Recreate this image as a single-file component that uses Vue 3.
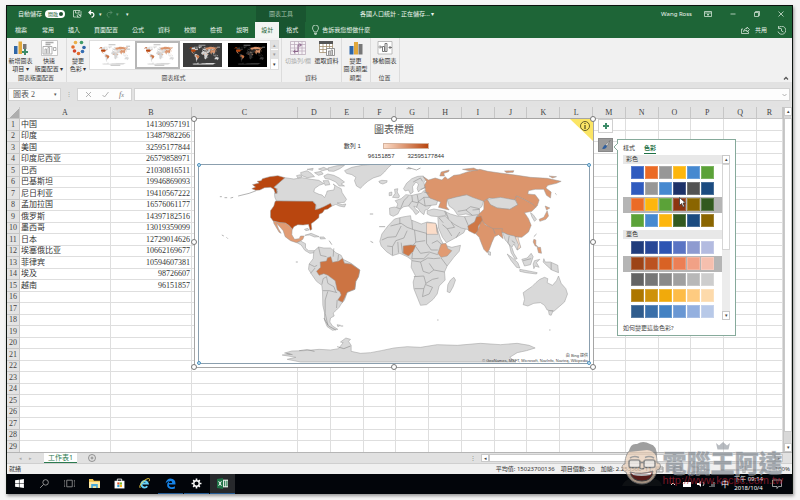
<script setup>
import { ref } from 'vue'

const tabs = ['檔案', '常用', '插入', '頁面配置', '公式', '資料', '校閱', '檢視', '說明']
const letters = 'ABCDEFGHIJKLMNOPQR'.split('')
const data = [
  ['中国', '14130957191'], ['印度', '13487982266'], ['美国', '32595177844'],
  ['印度尼西亚', '26579858971'], ['巴西', '21030816511'], ['巴基斯坦', '19946869093'],
  ['尼日利亚', '19410567222'], ['孟加拉国', '16576061177'], ['俄罗斯', '14397182516'],
  ['墨西哥', '13019359099'], ['日本', '12729014626'], ['埃塞俄比亚', '10662169677'],
  ['菲律宾', '10594607381'], ['埃及', '98726607'], ['越南', '96151857'],
]
const rows = Array.from({ length: 29 }, (_, i) => data[i] || ['', ''])
const formula = ref('')
const nameBox = ref('圖表 2')

const colorful = [
  ['#2f5bbf', '#eb6b26', '#979797', '#fdb60d', '#4689d0', '#5ba238'],
  ['#2f5bbf', '#979797', '#4689d0', '#1d3168', '#535353', '#1b4b80'],
  ['#eb6b26', '#fdb60d', '#5ba238', '#8c3510', '#8a6500', '#32591f'],
  ['#5ba238', '#4689d0', '#fdb60d', '#32591f', '#1b4b80', '#8a6500'],
]
const mono = [
  ['#203c7c', '#274797', '#2d55b3', '#5a74c4', '#8e9bd0', '#b3bbe0'],
  ['#9c4316', '#bb5220', '#d96224', '#ec7f55', '#f1a186', '#f5bfae'],
  ['#646464', '#777777', '#898989', '#a0a0a0', '#b8b8b8', '#cdcdcd'],
  ['#ad7700', '#ce920a', '#f1aa0b', '#fdbc48', '#fecb80', '#fddaab'],
  ['#2f5c8d', '#396fa9', '#4382c3', '#6997d3', '#94b0df', '#b8c9e8'],
]

/* Land areas of the map chart; tone selects the value colour */
const land = [
  // North America
  ['n', 'M283 203 310 207 335 203 362 208 385 211 400 221 386 226 372 236 370 246 386 253 395 255 402 263 408 250 410 243 430 240 433 228 428 222 440 230 452 236 455 248 468 268 462 277 440 279 455 284 466 282 462 291 446 288 436 283 420 290 402 291 385 297 374 298 377 288 370 275 258 273 253 262 252 250 262 246 250 232Z'],
  ['n', 'M330 188 350 182 362 190 372 200 350 203 334 197ZM318 197 330 194 334 201 322 204ZM372 188 392 184 398 192 384 196ZM350 178 368 175 366 181ZM384 177 400 172 412 178 396 182ZM412 174 440 167 462 166 448 176 430 184 414 183ZM400 198 412 192 430 196 446 204 462 216 452 222 462 228 446 228 436 216 418 208 404 206ZM398 212 414 212 418 224 404 226Z'],
  ['n', 'M462 182 484 172 520 165 560 162 603 164 592 174 582 186 570 197 548 204 532 214 518 226 510 235 498 228 492 212 496 202 484 194 468 190Z'],
  ['n', 'M565 214 574 211 590 212 589 217 577 222 568 219Z'],
  ['h', 'M283 203 262 197 238 200 216 206 212 212 200 214 206 219 186 224 195 231 184 236 196 241 208 240 222 233 240 232 250 238 254 250 260 250 258 236 250 232Z'],
  ['h', 'M258 273 366 274 376 284 374 299 384 297 400 290 420 280 424 288 412 297 402 299 396 308 386 313 385 323 372 334 362 341 364 358 359 361 354 343 338 345 322 344 310 350 306 358 294 345 284 339 268 338 248 333 240 322 240 302 250 288 254 274Z'],
  ['m', 'M249 333 268 338 284 339 296 347 305 358 304 374 312 388 326 386 330 378 341 378 337 388 327 395 318 398 300 392 284 380 278 362 266 348 258 340 264 356 272 370 266 367 256 350 250 340Z'],
  ['n', 'M319 398 330 393 345 401 345 414 354 422 372 422 374 428 358 430 343 421 332 405ZM343 376 362 370 386 380 372 381 358 375ZM388 381 400 381 405 386 390 387ZM342 358 352 355 356 360 346 362Z'],
  // South America
  ['n', 'M370 424 384 411 400 414 420 414 436 428 452 436 458 448 482 460 508 480 504 500 496 514 493 538 470 547 462 570 452 582 446 592 438 600 428 609 431 618 420 624 418 636 426 648 442 658 426 661 410 650 402 630 402 608 397 586 396 544 394 526 378 514 364 494 354 478 356 462 368 446Z'],
  ['b', 'M378 484 390 472 389 456 408 453 411 443 421 440 426 457 445 453 456 445 462 460 482 462 508 480 504 500 496 514 493 538 470 547 462 565 456 577 442 570 452 555 448 545 440 540 434 512 412 496 400 491 386 496Z'],
  // Europe
  ['n', 'M597 294 612 291 630 296 622 312 608 319 598 314ZM606 262 614 250 612 238 622 236 620 246 627 258 624 264ZM596 248 604 246 604 256 596 257Z'],
  ['n', 'M639 236 648 220 664 206 682 199 698 198 708 208 700 216 704 234 690 238 684 246 680 236 684 222 676 216 666 230 668 246 660 252 654 240 644 243Z'],
  ['n', 'M614 272 632 266 646 254 664 256 692 250 702 240 712 246 716 262 742 270 738 284 722 286 712 298 704 300 700 314 690 306 682 294 670 288 674 296 686 306 676 314 668 302 654 288 640 290 630 297 618 292 622 282Z'],
  ['n', 'M710 302 730 297 748 300 766 304 766 316 744 320 722 318 710 312Z'],
  // Africa
  ['n', 'M612 327 636 321 660 317 662 330 678 336 692 342 710 336 735 340 742 360 750 386 760 405 784 412 810 406 806 424 790 442 770 468 762 486 764 510 746 528 740 552 728 568 708 584 690 586 682 566 670 536 668 516 674 496 662 472 664 450 650 440 628 430 606 437 588 425 572 408 568 394 574 372 592 348Z'],
  ['n', 'M780 510 790 502 795 510 788 530 778 548 770 545 772 524Z'],
  ['e', 'M708 338 736 340 742 373 708 373Z'],
  ['k', 'M638 408 660 405 676 406 668 424 654 438 638 430Z'],
  ['m', 'M742 430 752 402 766 400 772 416 784 422 770 438 752 442Z'],
  // Asia
  ['n', 'M742 322 764 318 782 336 802 348 826 354 820 368 794 384 768 398 756 382 744 354Z'],
  ['n', 'M762 304 780 312 800 318 822 320 862 314 858 332 834 348 838 360 812 354 790 342 772 326Z'],
  ['n', 'M770 268 794 260 842 252 880 270 874 290 866 296 868 312 846 316 826 312 802 316 790 298 776 288Z'],
  ['r', 'M698 200 714 210 734 204 754 210 764 200 772 208 790 196 806 194 830 186 868 178 892 184 928 189 980 196 1020 202 1070 205 1112 214 1098 220 1072 226 1066 234 1082 246 1080 264 1068 256 1060 238 1034 238 1014 242 1012 252 1034 254 1046 270 1040 288 1028 296 1026 282 1000 268 978 258 974 270 940 268 896 264 880 274 846 262 828 254 794 262 770 268 768 290 776 300 744 292 750 276 718 264 706 246 702 226 708 214Z'],
  ['r', 'M748 198 752 186 776 180 774 185 760 190 762 198ZM816 178 850 174 862 180 836 182ZM942 183 970 182 968 187 948 188ZM1076 198 1098 200 1086 204Z'],
  ['n', 'M888 268 930 262 974 270 982 284 958 298 920 294 898 284Z'],
  ['r', 'M880 274 890 268 900 284 920 294 958 298 982 284 974 268 978 258 1000 268 1026 282 1036 292 1024 304 1002 308 1014 326 1022 346 1014 366 994 382 974 381 956 376 938 368 920 366 896 352 872 332 862 316 880 298Z'],
  ['r', 'M872 326 884 344 908 356 936 356 934 366 938 386 924 374 912 380 904 398 896 420 890 428 880 418 872 398 866 382 856 372 866 350Z'],
  ['k', 'M832 348 852 336 858 320 872 318 876 330 864 348 862 362 854 372 834 362Z'],
  ['n', 'M936 366 952 374 972 378 982 392 990 412 980 420 970 402 964 412 970 430 980 446 974 448 962 428 956 402 944 390Z'],
  ['e', 'M974 382 982 380 986 396 991 412 980 420 984 404Z'],
  ['n', 'M1020 308 1028 314 1038 328 1032 334 1024 320ZM892 424 900 426 900 436 894 434Z'],
  ['m', 'M1064 288 1078 294 1068 300ZM1070 302 1074 318 1066 328 1048 334 1046 328 1060 322Z'],
  ['m', 'M1030 388 1036 390 1036 404 1042 410 1034 408 1028 396ZM1040 412 1050 412 1053 430 1044 428Z'],
  ['n', 'M950 432 966 444 982 458 988 474 978 472 962 452ZM988 478 1010 482 1040 488 1038 492 1006 488 988 484ZM994 448 1010 444 1022 430 1028 440 1020 464 1002 468ZM1032 452 1048 448 1038 458 1046 472 1034 468 1030 476 1028 462ZM1060 446 1064 456 1080 456 1102 466 1104 488 1084 480 1070 468 1058 456Z'],
  ['n', 'M998 548 1012 538 1024 530 1036 518 1048 508 1062 502 1072 506 1070 518 1086 526 1098 512 1104 498 1112 520 1126 536 1131 552 1122 576 1106 590 1090 604 1070 600 1062 586 1050 578 1030 580 1012 588 998 584 1002 568ZM1074 602 1088 602 1082 616 1076 614Z'],
  // Antarctica
  ['n', 'M275 735 300 733 282 729 304 723 340 722 386 718 420 720 444 716 458 698 450 696 466 684 480 688 474 694 482 706 482 724 510 730 540 728 572 722 610 714 650 710 690 712 740 704 800 706 870 700 930 704 980 700 1016 706 1034 714 1008 722 980 728 958 742 976 756 330 756 290 748 316 742Z'],
  ['n', 'M440 644 450 646 442 650ZM88 618Z'],
]
const borders = 'M384 411 390 436 408 440M356 462 372 470 380 466M360 490 374 474M394 524 398 506 408 500M408 500 412 520 430 530 436 546M397 542 416 542 440 548M412 544 404 570 404 610 412 645M430 415 428 440M444 434 442 452M440 570 438 594' +
  'M600 348 632 340 650 352 672 360 708 370M628 324 628 342M664 330 666 358M632 348 616 380 592 382 574 390M650 362 640 384 616 392 606 410 590 408M672 360 676 396 666 408M708 370 708 400 722 420 742 420M676 396 704 392M676 410 690 430 716 426 742 434M666 428 664 446 700 446 716 430M664 452 690 456 712 444 730 446 750 444M690 456 698 484 716 490 730 480 716 460M670 500 700 498 706 520 726 508 744 504M672 536 700 536 706 520M700 536 696 560 716 552 726 532 706 524M730 480 762 486M752 444 770 468M724 400 740 392 752 402M606 410 606 436M622 396 624 428M632 398 636 430' +
  'M630 296 640 272 654 258M654 288 664 274 680 278 700 262 716 262M664 256 666 274M680 254 684 276 704 288 722 286M684 276 678 292M700 262 704 288M668 216 690 204 696 214M690 240 706 230M716 250 700 246' +
  'M782 336 792 352 770 356 756 344M770 356 784 378M796 384 808 366M766 306 774 326M822 320 834 348M802 304 826 300 846 316M846 300 868 298M826 300 840 290 866 296M746 324 758 338M908 356 914 372M956 378 952 400 962 410M964 392 974 400M1082 458 1082 480M998 452 1022 446M740 368 738 344'
const islands = 'M197 242 176 250 143 258M88 260H94M102 263H110M120 264 128 262M94 375 100 378M108 382 112 386M316 456H322M538 312H548M540 394 548 398M566 350H584M652 172 678 180 690 174M648 176 662 176M416 392 424 404M744 630H740M1076 660H1080M1094 250 1098 254M400 624 414 648 436 660M450 648H458M260 236 256 250M1038 372 1030 380M288 730 306 734M326 722 350 719 372 724M440 710 460 716 480 708'
</script>

<template>
  <div class="desktop">
    <svg class="defs" aria-hidden="true">
      <symbol id="world" viewBox="27 165 1167 594">
        <path v-for="(a, i) in land" :key="i" :d="a[1]" class="land" :class="a[0]" />
        <path :d="borders" class="lines" />
        <path :d="islands" class="isles" />
      </symbol>
    </svg>

    <main class="window">
      <header class="green">
        <div class="titlebar">
          <div class="quick">
            <span>自動儲存</span>
            <button class="switch" role="switch" aria-checked="true"><span>開啟</span><i></i></button>
            <svg class="save" width="9" height="8" viewBox="0 0 18 16"><path d="M1 1h13l2 2v4M1 1v13h5M5 1v5h7V1M8 12a4 4 0 0 1 7-2M16 7v4h-4M16 12a4 4 0 0 1-7 2M8 16v-3h3" /></svg>
            <svg width="8" height="8" viewBox="0 0 16 16"><path class="thick" d="M6 1 2 5l4 4M2 5h7a5 5 0 0 1 0 9H7" /></svg>
            <span class="tiny">▾</span>
            <svg class="faint" width="8" height="8" viewBox="0 0 16 16"><path d="m10 1 4 4-4 4M14 5H7a5 5 0 0 0 0 9h2" /></svg>
            <span class="tiny faint">▾</span>
            <span class="tiny last">▾</span>
          </div>
          <div class="context">圖表工具</div>
          <div class="doc">各國人口統計 - 正在儲存... ▾</div>
          <div class="system">
            <span class="user">Wang Ross</span>
            <svg width="8" height="8" viewBox="0 0 16 16"><path d="M1 3h14v10H1zM1 6h14M8 12V8M6 10l2-2 2 2" /></svg>
            <svg width="6" height="8" viewBox="0 0 12 16"><path d="M1 8h10" /></svg>
            <svg width="6" height="8" viewBox="0 0 12 16"><path d="M1 5h8v8H1zM3 5V3h8v8H9" /></svg>
            <svg width="6" height="8" viewBox="0 0 12 16"><path d="m1 3 10 10M11 3 1 13" /></svg>
          </div>
        </div>
        <nav class="tabs">
          <button v-for="t in tabs" :key="t">{{ t }}</button>
          <button class="active">設計</button>
          <button class="format">格式</button>
          <button class="tell">
            <svg width="7" height="10" viewBox="0 0 14 20"><path d="M4 14c0-3-3-4-3-8a6 6 0 0 1 12 0c0 4-3 5-3 8zM4 17h6M5 19h4" /></svg>告訴我您想做什麼</button>
          <span class="share">
            <svg width="9" height="8" viewBox="0 0 18 16"><path d="M4 6H1v9h14v-4M5 11c1-5 4-6 7-6V2l5 5-5 5V9c-3 0-5 0-7 2z" /></svg>
            <button>共用</button>
            <svg width="9" height="9" viewBox="0 0 18 18"><path d="M3 4a8 8 0 1 1-1 7M3 0v5h5M9 5v5l4 2" /></svg>
          </span>
        </nav>
      </header>

      <section class="ribbon">
        <div class="group">
          <div class="tools">
            <button class="tool">
              <svg width="16" height="16" viewBox="0 0 32 32"><path fill="#2f66a8" d="M2 12h7v16H2z" /><path fill="#e2a83c" d="M11 3h7v25h-7z" /><path fill="#777" d="M20 8h7v20h-7z" /><path stroke="#f1f1f1" stroke-width="8" d="M18 24h13M24 18v13" /><path stroke="#3c8b68" stroke-width="4" d="M18 24h12M24 18v12" /></svg>
              新增圖表<br>項目 ▾</button>
            <button class="tool wide">
              <svg width="17" height="16" viewBox="0 0 34 32"><path fill="#fff" stroke="#b5b5b5" stroke-width="1.5" d="M1 1h32v30H1z" /><path stroke="#aaa" stroke-width="3" d="M9 5h16M9 9h10" /><path fill="none" stroke="#999" stroke-width="1.5" d="M4 13h18v15H4zM8 27V18h3v9M14 27V15h3v12M25 15h5v6h-5z" /></svg>
              快速<br>版面配置 ▾</button>
          </div>
          <h2>圖表版面配置</h2>
        </div>
        <div class="group styles">
          <div class="tools">
            <button class="tool colors">
              <svg width="15" height="16" viewBox="0 0 30 32"><g><circle cx="9" cy="5" r="3.6" fill="#eab04b" /><circle cx="21" cy="5" r="3.6" fill="#3f9b69" /><circle cx="4" cy="14" r="3.6" fill="#e36b2b" /><circle cx="26" cy="15" r="3.6" fill="#2f66a8" /><circle cx="7" cy="22" r="3.6" fill="#d5442a" /><circle cx="23" cy="23" r="3.6" fill="#356eb3" /><circle cx="15" cy="27" r="3.6" fill="#e36b2b" /></g></svg>
              變更<br>色彩 ▾</button>
            <div class="gallery">
              <button class="thumb" aria-label="樣式 1"><svg viewBox="0 0 40 24"><use href="#world" x="1" y="3" width="38" height="19" /><path stroke="#b9b9b9" d="M16 1.5h7M34 3h4M34 6h4M18 22.5h10" /></svg></button>
              <button class="thumb picked" aria-label="樣式 2"><svg viewBox="0 0 40 24"><use href="#world" x="1" y="3" width="38" height="19" /><path stroke="#b9b9b9" d="M16 1.5h7M17 22.5h10" /></svg></button>
              <button class="thumb dark" aria-label="樣式 3"><svg viewBox="0 0 40 24"><use href="#world" x="1" y="3" width="38" height="19" /><path stroke="#aaa" d="M16 2h7M35 4h3" /></svg></button>
              <button class="thumb black" aria-label="樣式 4"><svg viewBox="0 0 40 24"><use href="#world" x="1" y="3" width="38" height="19" /><path stroke="#777" d="M16 2h7M35 4h3" /></svg></button>
              <div class="spin"><button>▴</button><button>▾</button><button class="more">▾</button></div>
            </div>
          </div>
          <h2>圖表樣式</h2>
        </div>
        <div class="group">
          <div class="tools">
            <button class="tool wide off">
              <svg width="16" height="16" viewBox="0 0 32 32"><path fill="#f6f2f6" stroke="#b9aab9" stroke-width="1.5" d="M1 3h30v26H1zM1 9h30M1 16h30M1 22h30M9 3v26M17 3v26M24 3v26" /><path fill="none" stroke="#8c668c" stroke-width="2" d="M8 23h8V10h6M19 7l4 3-4 3M11 20l-4 3 4 3" /></svg>
              切換列/欄</button>
            <button class="tool">
              <svg width="16" height="16" viewBox="0 0 32 32"><path fill="#fff" stroke="#a08b6a" stroke-width="1.5" d="M1 3h26v22H1zM1 13h26M1 19h26M8 3v22M15 3v22M21 3v22" /><path fill="#555" d="M0 2h28v6H0z" /><path fill="#fff" stroke="#777" stroke-width="1.5" d="M15 17h16v14H15zM19 30v-8h3v8M24 30V20h3v10" /></svg>
              選取資料</button>
          </div>
          <h2>資料</h2>
        </div>
        <div class="group">
          <div class="tools">
            <button class="tool">
              <svg width="16" height="16" viewBox="0 0 32 32"><path fill="#2f66a8" d="M3 12h8v17H3z" /><path fill="#e2a83c" d="M12 4h8v25h-8z" /><path fill="#777" d="M21 8h8v21h-8z" /></svg>
              變更<br>圖表類型</button>
          </div>
          <h2>類型</h2>
        </div>
        <div class="group">
          <div class="tools">
            <button class="tool">
              <svg width="16" height="16" viewBox="0 0 32 32"><path fill="#fff" stroke="#aaa" stroke-width="1.5" d="M2 3h28v25H2z" /><path fill="none" stroke="#777" stroke-width="2" d="M11 23V13h4v10zM16 23V7h4v16zM3 14h6M6 11l3 3-3 3M30 15h-6M27 12l-3 3 3 3" /></svg>
              移動圖表</button>
          </div>
          <h2>位置</h2>
        </div>
        <button class="collapse" aria-label="摺疊功能區"><svg width="6" height="4" viewBox="0 0 12 8"><path d="m2 7 4-4 4 4" fill="none" stroke="#555" stroke-width="2.5" /></svg></button>
      </section>

      <section class="formula">
        <label class="name"><input v-model="nameBox" aria-label="名稱方塊"><span>▾</span></label>
        <span class="dots">⋮</span>
        <div class="fx">
          <svg width="7" height="7" viewBox="0 0 14 14"><path d="m2 2 10 10M12 2 2 12" /></svg>
          <svg width="7" height="7" viewBox="0 0 14 14"><path d="m1 8 4 4 8-10" /></svg>
          <em>f<sub>x</sub></em>
        </div>
        <label class="entry"><input v-model="formula" aria-label="資料編輯列"><svg width="5" height="4" viewBox="0 0 10 8"><path d="m1 2 4 4 4-4" /></svg></label>
      </section>

      <section class="sheet">
        <div class="grid">
          <table>
            <colgroup>
              <col class="c-num"><col class="c-a"><col class="c-b"><col class="c-c">
              <col v-for="n in 14" :key="n"><col class="c-r">
            </colgroup>
            <thead>
              <tr><th class="corner"></th><th v-for="l in letters" :key="l" scope="col">{{ l }}</th></tr>
            </thead>
            <tbody>
              <tr v-for="(r, i) in rows" :key="i">
                <th scope="row">{{ i + 1 }}</th>
                <td>{{ r[0] }}</td><td class="num">{{ r[1] }}</td>
                <td v-for="n in 16" :key="n"></td>
              </tr>
            </tbody>
          </table>

          <figure class="chart">
            <figcaption>圖表標題</figcaption>
            <div class="legend">
              <span>數列 1</span>
              <div class="scale"><div class="ramp"></div><div class="ends"><span>96151857</span><span>32595177844</span></div></div>
            </div>
            <div class="plot">
              <svg class="map" viewBox="0 0 389 198" role="img" aria-label="世界地圖"><use href="#world" width="389" height="198" /></svg>
              <p>由 Bing 提供<br>© GeoNames, MSFT, Microsoft, NavInfo, Navteq, Wikipedia</p>
              <i class="dot tl"></i><i class="dot tr"></i><i class="dot bl"></i><i class="dot br"></i>
            </div>
            <svg class="info" width="24" height="22" viewBox="0 0 24 22"><path fill="#fbe565" d="M1 0h23v22z" /><circle cx="16" cy="7" r="4.5" fill="none" stroke="#66602a" /><path stroke="#4d491f" stroke-width="1.2" d="M16 6v4M16 4v1" /></svg>
            <i v-for="h in ['nw', 'n', 'ne', 'w', 'e', 'sw', 's', 'se']" :key="h" class="handle" :class="h"></i>
          </figure>

          <div class="side">
            <button aria-label="圖表項目"><svg width="8" height="8" viewBox="0 0 8 8"><path stroke="#3c8b68" stroke-width="2" d="M4 1v6M1 4h6" /></svg></button>
            <button class="on" aria-label="圖表樣式"><svg width="10" height="10" viewBox="0 0 20 20"><path d="m18 1-9 9 3 2z" fill="#fff" stroke="#555" /><path d="M9 10c-4 0-4 5-7 7 4 2 9 0 10-5z" fill="#2f5f9e" /></svg></button>
          </div>

          <aside class="palette">
            <div class="ptabs"><button>樣式</button><button class="sel">色彩</button></div>
            <div class="pbody">
              <div class="plist">
                <h3>彩色</h3>
                <button v-for="(r, i) in colorful" :key="'c' + i" class="prow" :class="{ hit: i === 2 }" :aria-label="'彩色 ' + (i + 1)"><i v-for="c in r" :key="c" :style="{ background: c }"></i></button>
                <h3 class="second">單色</h3>
                <button v-for="(r, i) in mono" :key="'m' + i" class="prow" :class="{ hit: i === 1 }" :aria-label="'單色 ' + (i + 1)"><i v-for="c in r" :key="c" :style="{ background: c }"></i></button>
              </div>
              <div class="pscroll"><button>▴</button><span></span><button>▾</button></div>
            </div>
            <a href="#colors">如何變更這些色彩?</a>
            <svg class="beak" width="5" height="8" viewBox="0 0 5 8"><path d="M5 0 1 4l4 4" fill="#fff" stroke="#86aa9b" /></svg>
            <svg class="cursor" width="7" height="11" viewBox="0 0 14 22"><path d="M1 1v16l4-4 3 7 3-1-3-7h5z" fill="#fff" stroke="#333" stroke-width="1.5" /></svg>
          </aside>
        </div>
        <div class="vscroll"><button>▴</button><span></span><button>▾</button></div>
      </section>

      <footer class="sheets">
        <span class="arrows"><button>◂</button><button>▸</button></span>
        <button class="sheet-tab">工作表1</button>
        <button class="add" aria-label="新增工作表"><svg width="8" height="8" viewBox="0 0 16 16"><circle cx="8" cy="8" r="7" /><path d="M8 5v6M5 8h6" /></svg></button>
        <div class="hscroll"><span>⋮</span><button>◂</button><i></i><button>▸</button></div>
      </footer>

      <footer class="status">
        <span>就緒</span>
        <div class="stats"><span>平均值: 15023700136</span><span>項目個數: 30</span><span>加總: 2.25356E+11</span></div>
        <div class="views">
          <svg width="64" height="7" viewBox="0 0 64 7"><path d="M1 1h7v5H1zM1 3h7M4 1v5M19 1h7v5h-7zM37 1h6v5h-6zM49 4h6" /></svg>
          <svg width="52" height="7" viewBox="0 0 52 7"><path d="M0 4h46M49 2v4M47 4h4" /><path d="M22 0h2v7h-2z" fill="#444" /></svg>
          <span>100%</span>
        </div>
      </footer>

      <footer class="taskbar">
        <button aria-label="開始"><svg viewBox="0 0 20 20"><path fill="#fff" d="m2 4 7-1v6H2zM10 3l8-1v7h-8zM2 10h7v7l-7-1zM10 10h8v8l-8-1z" /></svg></button>
        <button aria-label="搜尋"><svg viewBox="0 0 20 20"><g fill="none" stroke="#aaa" stroke-width="1.5"><circle cx="12" cy="8" r="5" /><path d="m8 12-6 6" /></g></svg></button>
        <button aria-label="工作檢視"><svg viewBox="0 0 20 20"><path fill="none" stroke="#999" stroke-width="1.5" d="M5 4h10v12H5zM2 5H0v10h2M18 5h2v10h-2" /></svg></button>
        <button aria-label="檔案總管"><svg viewBox="0 0 20 20"><path fill="#f3c64f" d="M0 2h7l2 3h11v13H0z" /><path fill="#fce9a5" d="M0 7h20v11H0z" /><path fill="#48a9d8" d="M4 11h12v7h-3v-3H7v3H4z" /></svg></button>
        <button aria-label="市集"><svg viewBox="0 0 20 20"><path fill="none" stroke="#fff" stroke-width="1.5" d="M6 6V2h8v4" /><path fill="#fff" d="M1 5h18v14H1z" /><path fill="#e3522b" d="M6 8h4v4H6z" /><path fill="#79b72b" d="M10.5 8h4v4h-4z" /><path fill="#26a0da" d="M6 12.5h4v4H6z" /><path fill="#f5b51c" d="M10.5 12.5h4v4h-4z" /></svg></button>
        <button class="run-gap" aria-label="Internet Explorer"><svg viewBox="0 0 20 20"><path fill="none" stroke="#67d0f5" stroke-width="3.5" d="M5 10h11a6 6 0 1 0-1 5" /><path fill="none" stroke="#f3cf3d" stroke-width="1.8" d="M2 18C-1 13 10 2 17 1c3 0 3 2 1 5" /></svg></button>
        <button class="run" aria-label="Edge"><svg viewBox="0 0 20 20"><path fill="#1683e8" d="M1 10C2 4 6 1 10 1c6 0 9 4 9 8v3H7c0 5 6 6 11 3v4c-7 3-15 0-14-7 0-3 2-5 4-6-2 0-5 1-7 4zm6-1h6c0-5-6-4-6 0z" /></svg></button>
        <button class="run" aria-label="設定"><svg viewBox="0 0 20 20"><circle cx="10" cy="10" r="5" fill="none" stroke="#fff" stroke-width="2.5" /><path stroke="#fff" stroke-width="3" d="M10 1v3M10 16v3M1 10h3M16 10h3M4 4l2 2M14 14l2 2M16 4l-2 2M6 14l-2 2" /></svg></button>
        <button class="run current" aria-label="Excel"><svg viewBox="0 0 20 20"><path fill="#e8f3ec" d="M9 3h11v14H9z" /><path fill="#1e7145" d="M0 2 11 0v20L0 18zM13 5h2v10h-2zM17 5h2v10h-2z" /><path stroke="#fff" stroke-width="1.8" d="m3 6 5 8M8 6l-5 8" /></svg></button>
        <div class="tray">
          <svg width="46" height="8" viewBox="0 0 46 8"><path d="m1 5 2-2 2 2" fill="none" stroke="#ddd" /><path fill="#fff" d="M13 2h8v5h-8zM27 3h2l2-2v6l-2-2h-2z" /><path fill="none" stroke="#bbb" d="M33 2q2 2 0 4M40 7V6M42 7V4M44 7V2" /></svg>
          <span class="ime">中</span>
          <time>下午 09:14<br>2018/10/4</time>
          <svg width="10" height="10" viewBox="0 0 20 20"><path d="M1 2h18v13h-6l-3 4v-4H1z" fill="none" stroke="#ccc" stroke-width="1.5" /></svg>
        </div>
      </footer>

      <div class="brand">
        <svg class="face" width="46" height="46" viewBox="0 0 92 92">
          <path fill="#222" fill-opacity=".55" d="M4 90q4-12 20-16l48 2q10 4 12 14z" />
          <path fill="#e6cbb3" stroke="#777" stroke-width="2" d="M20 18C12 26 10 36 10 46c-8 0-8 14 2 16 4 14 16 24 32 24s28-12 30-28c10-2 8-16 0-14 0-12-2-20-6-28-12-8-36-8-48 2z" />
          <path fill="#777" d="M18 22Q20 4 34 6q12-8 26 0 14 2 14 26-8-14-20-14-18 2-36 4z" />
          <g fill="#eee" fill-opacity=".8" stroke="#666" stroke-width="3"><rect x="18" y="38" width="22" height="15" rx="4" /><rect x="48" y="38" width="22" height="15" rx="4" /><path d="M40 43h8" /></g>
          <path d="M20 34q8-5 18-1M50 33q9-4 18 1M40 54q4 4 8 0" fill="none" stroke="#777" stroke-width="3" />
          <path fill="#7c2722" stroke="#555" stroke-width="2" d="M20 62q22 6 46-2-2 20-22 20T20 62z" /><path fill="#fff" d="M23 64q20 4 40-1l-2 5q-18 4-35 0z" />
        </svg>
        <div class="words">
          <svg class="crown" width="16" height="8" viewBox="0 0 32 16"><path fill="#9a9fa6" d="m2 2 6 5 8-7 8 7 6-5-3 13H5z" /></svg>
          <strong>電腦王阿達</strong>
          <span>http://www.kocpc.com.tw</span>
        </div>
      </div>
    </main>
  </div>
</template>

<style>
body { margin: 0; background: #f5f5f5; }
</style>

<style scoped>
* { box-sizing: border-box; }
.desktop {
  min-height: 100vh; padding: 5px 7px 6px 6px; display: flex;
  font: 6px/8px "Noto Sans", "Noto Sans CJK TC", sans-serif; color: #333;
}
button, input { font: inherit; color: inherit; background: none; border: 0; padding: 0; margin: 0; border-radius: 0; min-width: 0; }
h2, h3, p, figure { margin: 0; font: inherit; }
svg { flex: none; }
.defs { position: absolute; width: 0; height: 0; }
.window {
  flex: 1; min-width: 0; position: relative; display: flex; flex-direction: column;
  border: 1px solid #0b120e; border-bottom: 0; box-shadow: 1px 2px 3px #999; background: #e1e1e1;
}

/* map colours */
.land { fill: var(--land, #d9d9d9); stroke: var(--edge, #999); stroke-width: 1.5; stroke-linejoin: round; }
.land.h { fill: #b9460f; }
.land.b { fill: #cc7443; }
.land.k { fill: #cf7846; }
.land.r { fill: #dc956c; }
.land.m { fill: #e19b73; }
.land.e { fill: #fbdcc8; }
.lines { fill: none; stroke: var(--edge, #999); stroke-width: 2; stroke-linejoin: round; }
.isles { fill: none; stroke: var(--edge, #8c8c8c); stroke-width: 2; }

/* title and tabs */
.green { background: #1e6537; color: #edf5ef; }
.green svg path { fill: none; stroke: #dce9df; stroke-width: 1.5; }
.green svg path.thick { stroke-width: 2.5; stroke: #fff; }
.titlebar { display: flex; height: 16px; align-items: center; }
.quick { width: 249px; padding-left: 11px; display: flex; align-items: center; gap: 3px; }
.switch { width: 20px; height: 8px; border-radius: 4px; background: #fff; color: #1e6537; display: flex; align-items: center; justify-content: space-between; padding: 0 2px 0 3px; font-size: 5px; }
.switch i { width: 4px; height: 4px; border-radius: 50%; background: #1b4d2c; }
.save { margin: 0 3px 0 5px; }
.tiny { font-size: 5px; }
.last { margin-left: 4px; }
.faint { opacity: .35; }
.context { width: 50px; align-self: stretch; background: #195530; text-align: center; line-height: 16px; color: #a9c6b2; }
.doc { flex: 1; padding-left: 54px; font-size: 6px; white-space: nowrap; }
.system { display: flex; align-items: center; gap: 18px; padding-right: 8px; }
.user { margin-right: -6px; }
.tabs { display: flex; height: 16px; align-items: stretch; }
.tabs button { padding: 0 7px; white-space: nowrap; }
.tabs button:first-child { padding: 0 8px; }
.tabs .active { background: #f3f5f3; color: #1e6537; padding: 0 6px; }
.tabs .format { background: #195530; }
.tabs .tell { display: flex; align-items: center; gap: 3px; }
.share { margin-left: auto; display: flex; align-items: center; padding-right: 6px; gap: 5px; }
.share button { padding: 0 5px 0 0; }

/* ribbon */
.ribbon { display: flex; min-height: 44px; background: #f1f1f1; }
.group { display: flex; flex-direction: column; justify-content: space-between; border-right: 1px solid #dcdcdc; padding: 2px 2px 0 1px; text-align: center; }
.group h2 { color: #444; line-height: 8px; }
.tools { display: flex; gap: 1px; }
.tool { line-height: 8px; white-space: nowrap; width: 25px; text-align: center; }
.tool svg { display: block; margin: 0 auto 1px; }
.tool.wide { width: 30px; }
.tool.off { color: #aaa; }
.tool.colors { width: 20px; }
.gallery { display: flex; background: #fff; height: 30px; border: 1px solid #dedede; }
.thumb { width: 45px; padding: 2px 3px; display: flex; }
.thumb svg { width: 100%; height: 100%; background: #fff; --edge: #d0d0d0; }
.thumb.picked { border: 2px solid #b7b7b7; padding: 0 1px; }
.thumb.dark svg { background: #3c3c3c; --edge: #8a8a8a; }
.thumb.black svg { background: #000; --land: #3a3a3a; --edge: #333; }
.spin { display: flex; flex-direction: column; width: 8px; border-left: 1px solid #ddd; }
.spin button { flex: 1; font-size: 5px; line-height: 8px; background: #e1e1e1; color: #999; border-bottom: 1px solid #fff; }
.spin .more { background: #fff; color: #333; }
.collapse { margin: auto 3px 2px auto; display: flex; }

/* formula row */
.formula { display: flex; padding: 6px 2px 6px 1px; height: 25px; align-items: stretch; background: #e2e2e2; }
.name, .fx, .entry { background: #fdfdfd; border: 1px solid #d2d2d2; display: flex; align-items: center; }
.name { width: 53px; padding: 0 3px 0 4px; font: 8px/10px "Liberation Serif", "Noto Sans CJK TC", serif; color: #555; }
.name input { width: 100%; flex: 1; }
.name span { font-size: 5px; }
.dots { width: 16px; text-align: center; color: #999; line-height: 12px; }
.fx { width: 55px; justify-content: space-around; padding: 0 2px; color: #777; }
.fx em { font: italic 8px/10px "Liberation Serif", serif; }
.fx sub { font-size: 6px; vertical-align: baseline; }
.fx path, .entry path { fill: none; stroke: #999; stroke-width: 1.5; }
.entry { flex: 1; margin-left: 2px; padding-right: 2px; }
.entry input { flex: 1; }

/* worksheet */
.sheet { flex: 1 1 0; min-height: 345px; display: flex; overflow: hidden; background: #fff; }
.grid { flex: 1; position: relative; min-width: 0; }
table { width: 100%; table-layout: fixed; border-collapse: separate; border-spacing: 0; font: 8px/10px "Liberation Serif", "Noto Sans CJK SC", serif; color: #333; }
.c-num { width: 13px; } .c-a { width: 91px; } .c-b { width: 81px; } .c-c { width: 106px; } .c-r { width: 26px; }
th, td { padding: 0; height: 12px; line-height: 10px; border-right: 1px solid #dedede; border-bottom: 1px solid #dedede; white-space: nowrap; overflow: hidden; }
tbody tr:nth-child(even) > * { height: 11px; }
th { font-weight: 400; background: #e3e3e3; border-color: #c6c6c6; text-align: center; color: #444; }
td { padding-left: 1px; }
.num { text-align: right; padding-right: 1px; }
.corner { background: linear-gradient(135deg, #e3e3e3 58%, #adadad 58%); }
.vscroll { width: 9px; display: flex; flex-direction: column; background: #d8d8d8; border-left: 1px solid #c4c4c4; }
.vscroll button, .hscroll button, .pscroll button { background: #fff; border: 1px solid #c9c9c9; font-size: 5px; line-height: 7px; height: 9px; color: #444; }
.vscroll span { flex: 1; background: #fff; margin: 2px 0 11px; border: 1px solid #c9c9c9; }

/* chart laid over the cells */
.chart { position: absolute; left: 187px; top: 11px; width: 400px; height: 250px; background: #fff; border: 1px solid #a5a5a5; padding: 4px 3px 3px; display: flex; flex-direction: column; }
.chart figcaption { font: 10px/13px "Liberation Serif", "Noto Sans CJK TC", serif; color: #555; text-align: center; }
.legend { display: flex; justify-content: center; gap: 7px; margin-top: 6px; font-family: "Liberation Sans", "Noto Sans CJK TC", sans-serif; }
.ramp { height: 6px; width: 46px; margin: 1px auto 0; background: linear-gradient(90deg, #fbdcc8, #b9460f); border: 1px solid #d5b39e; }
.ends { display: flex; gap: 13px; line-height: 10px; margin-top: 2px; }
.plot { flex: 1; position: relative; margin-top: 3px; border: 1px solid #8b9fae; min-height: 0; }
.map { display: block; width: 100%; height: 100%; }
.plot p { position: absolute; right: 1px; bottom: 0; text-align: right; font: 4px/5px "Liberation Sans", "Noto Sans CJK TC", sans-serif; color: #444; }
.dot { position: absolute; width: 4px; height: 4px; border: 1px solid #4d91bd; border-radius: 50%; background: #cfe8f6; }
.tl { left: -2px; top: -2px; } .tr { right: -2px; top: -2px; } .bl { left: -2px; bottom: -2px; } .br { right: -2px; bottom: -2px; }
.info { position: absolute; right: 0; top: 0; }
.handle { position: absolute; width: 6px; height: 6px; border-radius: 50%; border: 1px solid #777; background: #fff; }
.nw, .w, .sw { left: -4px; } .n, .s { left: 196px; } .ne, .e, .se { right: -3px; }
.nw, .n, .ne { top: -3px; } .w, .e { top: 120px; } .sw, .s, .se { bottom: -3px; }
.side { position: absolute; left: 591px; top: 12px; display: flex; flex-direction: column; gap: 5px; }
.side button { width: 15px; height: 14px; border: 1px solid #d0d0d0; background: #fff; display: flex; align-items: center; justify-content: center; }
.side .on { background: #9a9a9a; border-color: #888; }

/* colour palette */
.palette { position: absolute; left: 610px; top: 32px; width: 119px; background: #fff; border: 1px solid #86aa9b; padding: 2px 5px 3px; }
.ptabs { display: flex; gap: 9px; height: 13px; }
.ptabs button { height: 12px; line-height: 10px; }
.ptabs .sel { font-weight: 700; color: #1e7145; border-bottom: 1px solid #1e7145; }
.pbody { display: flex; }
.plist { flex: 1; }
.plist h3 { background: #e8e8e8; line-height: 9px; padding-left: 3px; margin-bottom: 1px; }
.plist .second { margin-top: 1px; }
.prow { display: flex; width: 100%; justify-content: center; gap: 1px; padding: 1px 0 2px; }
.prow.hit { background: #b5b5b5; }
.prow i { width: 13px; height: 13px; border: 1px solid #ffffff33; }
.pscroll { width: 8px; display: flex; flex-direction: column; background: #ececec; }
.pscroll span { height: 86px; background: #fff; border: 1px solid #d5d5d5; margin-bottom: auto; }
.palette a { display: block; color: #444; text-decoration: none; margin-top: 4px; }
.beak { position: absolute; left: -5px; top: 3px; }
.cursor { position: absolute; left: 61px; top: 57px; }

/* bottom rows */
.sheets { display: flex; height: 11px; align-items: stretch; background: #e1e1e1; border-top: 1px solid #b5b5b5; }
.arrows { width: 37px; display: flex; justify-content: center; gap: 7px; color: #aaa; font-size: 5px; }
.sheet-tab { background: #fff; color: #2c7b50; border-bottom: 1px solid #2c7b50; padding: 0 4px; font-size: 7px; line-height: 8px; }
.add { margin-left: 11px; display: flex; align-items: center; }
.add svg { fill: none; stroke: #777; stroke-width: 1.5; }
.hscroll { margin-left: auto; width: 41%; display: flex; align-items: center; padding-right: 9px; }
.hscroll span { color: #888; width: 11px; }
.hscroll button { width: 8px; height: 8px; line-height: 6px; }
.hscroll i { flex: 1; height: 8px; background: #fff; border: 1px solid #c9c9c9; }
.status { height: 11px; display: flex; align-items: center; background: #f0f0f0; border-top: 1px solid #cfcfcf; padding: 0 2px; white-space: nowrap; }
.stats { display: flex; gap: 6px; margin-left: auto; }
.views { display: flex; align-items: center; gap: 2px; margin-left: 3px; }
.views path { fill: none; stroke: #999; }
.taskbar { height: 20px; background: #02050a; display: flex; color: #fff; }
.taskbar > button { width: 25px; display: flex; align-items: center; justify-content: center; border-bottom: 1px solid transparent; }
.taskbar > button svg { width: 11px; height: 11px; }
.taskbar .run { border-color: #245b95; margin-left: 1px; }
.taskbar .current { background: #27292c; }
.tray { margin-left: auto; display: flex; align-items: center; gap: 5px; padding-right: 10px; }
.ime { font-size: 8px; }
.tray time { text-align: center; font-size: 6px; line-height: 9px; margin-right: 4px; }

/* site mark over the lower right corner */
.brand { position: absolute; right: 9px; bottom: 7px; display: flex; align-items: flex-end; pointer-events: none; opacity: .7; }
.words { display: flex; flex-direction: column; margin-left: -3px; }
.words strong { font: 900 24px/25px "Noto Sans CJK TC", sans-serif; color: #858c94; -webkit-text-stroke: 1px #d5d8dc; paint-order: stroke fill; }
.words span { font: 11px/13px "Liberation Sans", sans-serif; color: #a81f32; }
.crown { align-self: center; margin-bottom: -1px; }
</style>
